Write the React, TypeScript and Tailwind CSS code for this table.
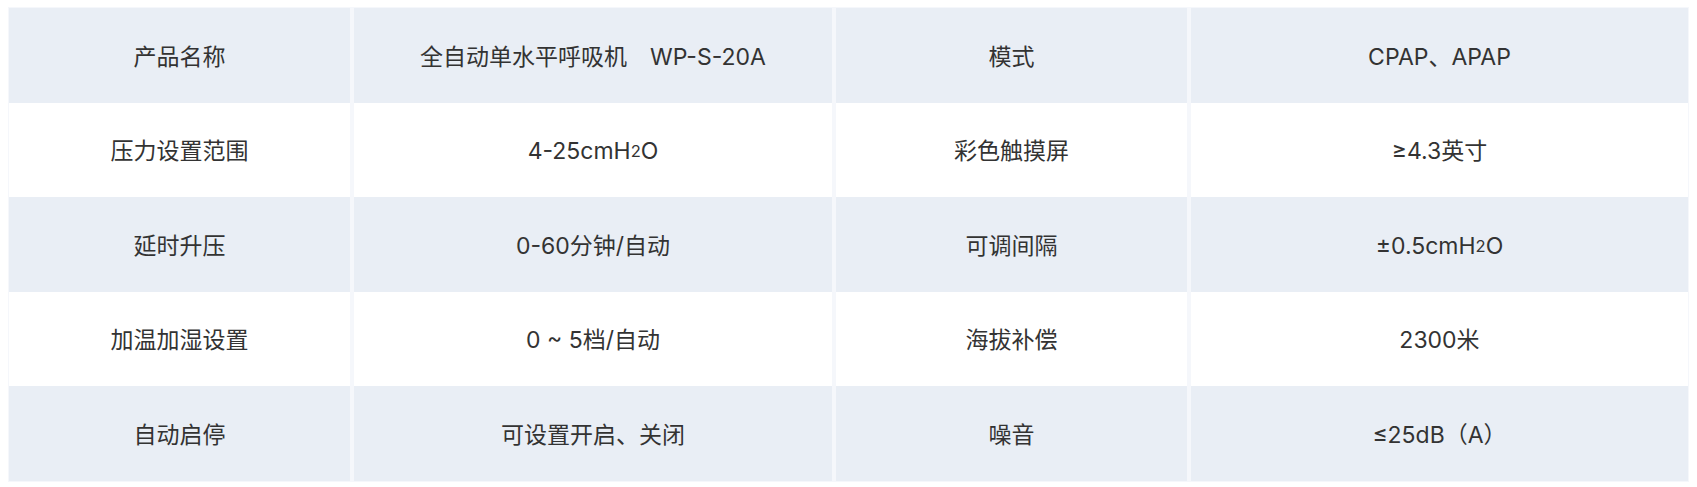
import React from "react";

const Sub = ({ children }: { children: React.ReactNode }) => (
  <span className="text-[0.72em]">{children}</span>
);

const rows: React.ReactNode[][] = [
  ["产品名称", "全自动单水平呼吸机　WP-S-20A", "模式", "CPAP、APAP"],
  ["压力设置范围", <>4-25cmH<Sub>2</Sub>O</>, "彩色触摸屏", "≥4.3英寸"],
  ["延时升压", "0-60分钟/自动", "可调间隔", <>±0.5cmH<Sub>2</Sub>O</>],
  ["加温加湿设置", "0 ~ 5档/自动", "海拔补偿", "2300米"],
  ["自动启停", "可设置开启、关闭", "噪音", "≤25dB（A）"],
];

export default function App() {
  return (
    <div
      className="w-[1697px] h-[487px] bg-white pt-[7px] pl-[8px]"
      style={{ fontFamily: 'Inter, "Noto Sans CJK SC", sans-serif' }}
    >
      <div className="w-[1681px] bg-[#f5f7fb] p-[1px] grid grid-cols-[341px_478px_351px_497px] gap-x-[4px] text-[23px] text-[#333333]">
        {rows.map((row, i) =>
          row.map((cell, j) => (
            <div
              key={`${i}-${j}`}
              className={`h-[94.6px] flex items-center justify-center whitespace-pre pt-[3px] ${
                i % 2 === 0 ? "bg-[#e9eef5]" : "bg-white"
              }`}
            >
              {cell}
            </div>
          ))
        )}
      </div>
    </div>
  );
}
